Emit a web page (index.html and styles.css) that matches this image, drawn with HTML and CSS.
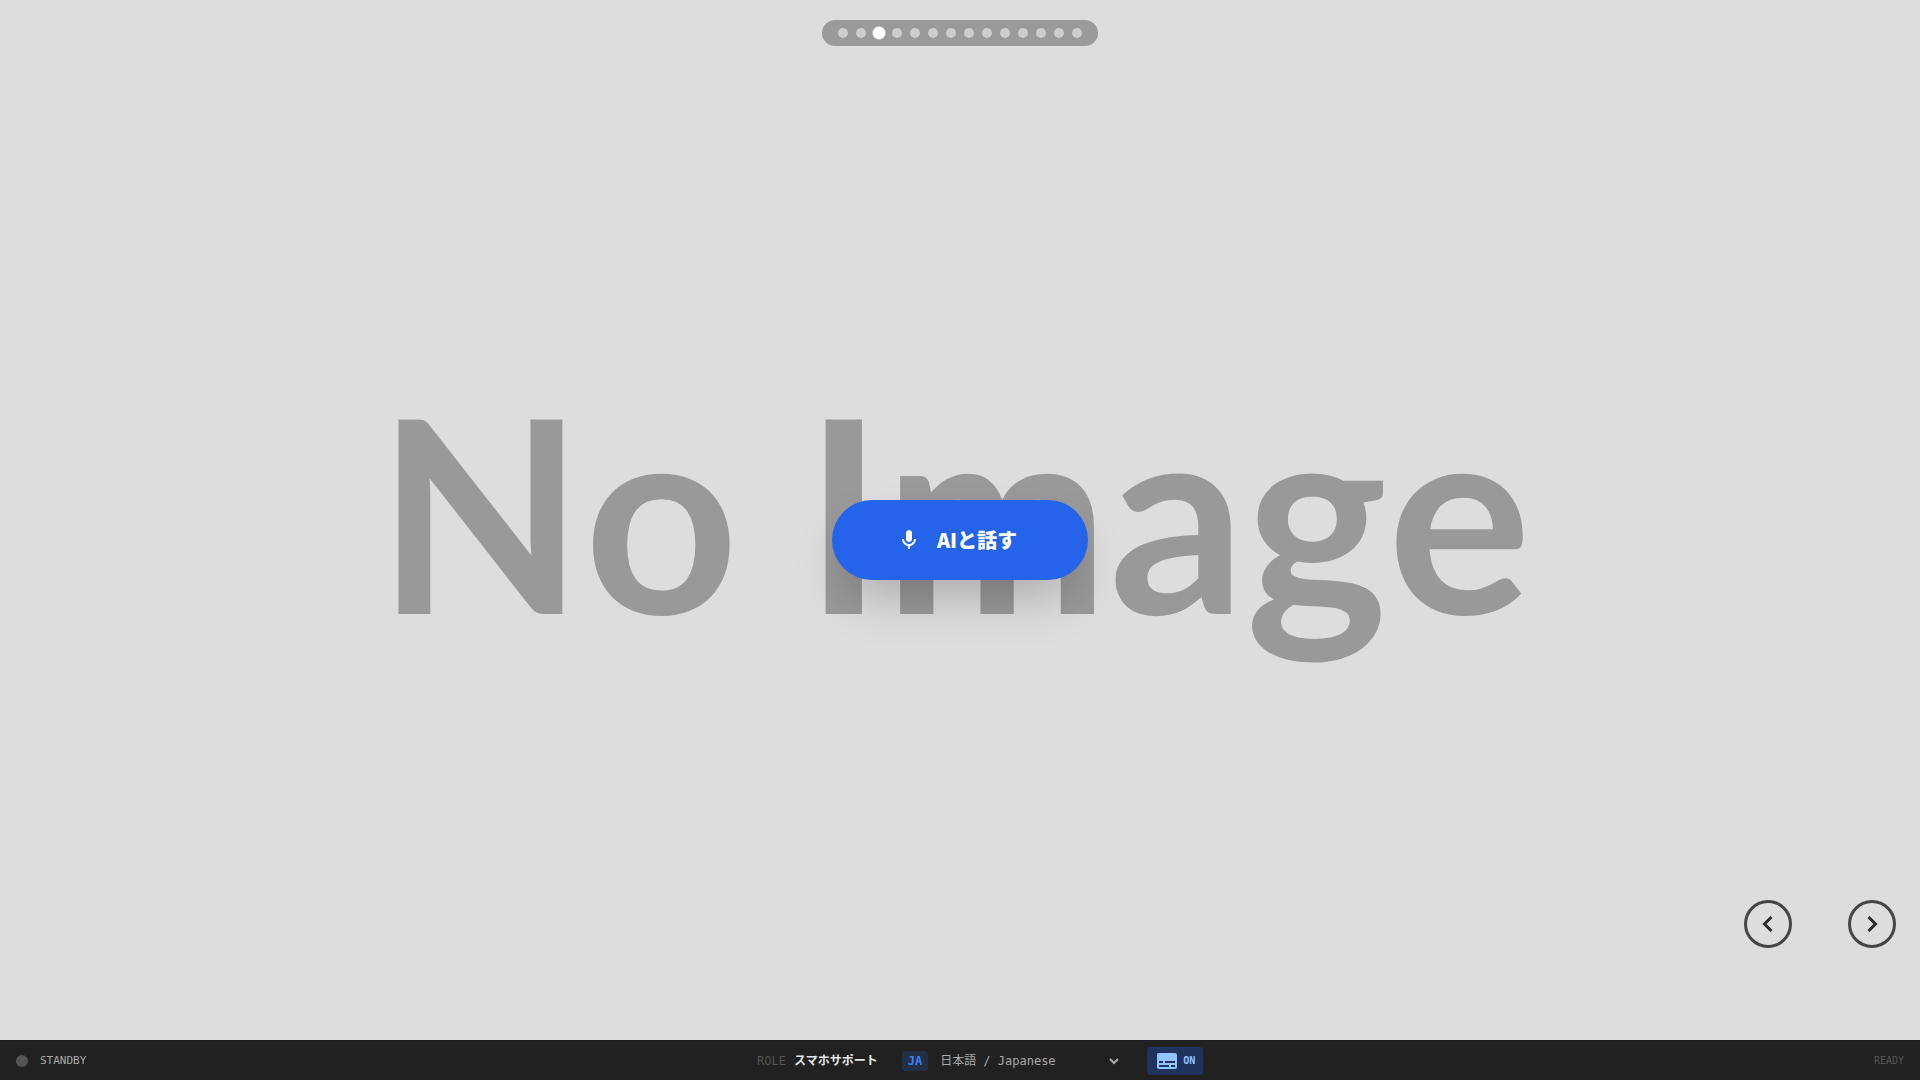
FILE: index.html
```html
<!DOCTYPE html>
<html lang="ja">
<head>
<meta charset="utf-8">
<meta name="viewport" content="width=device-width, initial-scale=1">
<title>スマホサポート</title>
<link rel="stylesheet" href="styles.css">
</head>
<body>
<div class="app">
  <main class="stage">
    <p class="placeholder">No Image</p>
    <div class="pager">
      <span class="dot"></span>
      <span class="dot"></span>
      <span class="dot dot-active"></span>
      <span class="dot"></span>
      <span class="dot"></span>
      <span class="dot"></span>
      <span class="dot"></span>
      <span class="dot"></span>
      <span class="dot"></span>
      <span class="dot"></span>
      <span class="dot"></span>
      <span class="dot"></span>
      <span class="dot"></span>
      <span class="dot"></span>
    </div>
    <button class="talk" type="button">
      <svg class="talk-icon" viewBox="0 0 24 24" aria-hidden="true"><path d="M12 14c1.66 0 3-1.34 3-3V5c0-1.66-1.34-3-3-3S9 3.340 9 5v6c0 1.660 1.340 3 3 3z"/><path d="M17 11c0 2.760-2.240 5-5 5s-5-2.240-5-5H5c0 3.530 2.610 6.430 6 6.920V21h2v-3.080c3.390-.49 6-3.390 6-6.920h-2z"/></svg>
      <span>AIと話す</span>
    </button>
    <nav class="slide-nav">
      <button class="round" type="button" aria-label="前へ"><svg class="round-icon" viewBox="0 0 24 24" aria-hidden="true"><path d="M15.500 5l-7 7 7 7"/></svg></button>
      <button class="round" type="button" aria-label="次へ"><svg class="round-icon" viewBox="0 0 24 24" aria-hidden="true"><path d="M8.500 5l7 7-7 7"/></svg></button>
    </nav>
  </main>
  <footer class="bar">
    <div class="status"><span class="lamp"></span><span>STANDBY</span></div>
    <div class="controls">
      <div class="role"><span class="role-label">ROLE</span><span class="role-name">スマホサポート</span></div>
      <div class="language">
        <label class="code" for="lang">JA</label>
        <div class="picker">
          <select class="select" id="lang"><option>日本語 / Japanese</option></select>
          <svg class="chevron" viewBox="0 0 10 10" aria-hidden="true"><path d="M1 3l4 4 4-4"/></svg>
        </div>
      </div>
      <button class="captions" type="button">
        <svg class="captions-icon" viewBox="0 0 20 16" aria-hidden="true"><rect width="20" height="16" rx="2"/><path class="captions-lines" d="M2 9h4M8 9h10M2 13h10M14 13h4"/></svg>
        <span>ON</span>
      </button>
    </div>
    <span class="ready">READY</span>
  </footer>
</div>
</body>
</html>
```
FILE: styles.css
```css
* {
  box-sizing: border-box;
}

body {
  margin: 0;
  font-family: "Noto Sans CJK JP", sans-serif;
  background: #ddd;
}

button,
select {
  margin: 0;
  padding: 0;
  border: 0;
  font: inherit;
  color: inherit;
  background: none;
  cursor: pointer;
}

.app {
  display: flex;
  flex-direction: column;
  min-height: 100vh;
}

/* The stage runs behind the status bar, so its centre is the window's. */
.stage {
  position: relative;
  flex: 1;
  display: grid;
  place-items: center;
  margin-bottom: -40px;
}

.placeholder {
  grid-area: 1 / 1;
  margin: 0;
  padding: 0 12px 60px 0;
  font-family: Lato, sans-serif;
  font-size: 269px;
  font-weight: 700;
  font-kerning: none;
  line-height: 320px;
  white-space: nowrap;
  color: #999;
}

.pager {
  position: absolute;
  top: 20px;
  left: 50%;
  transform: translateX(-50%);
  display: flex;
  gap: 8px;
  padding: 8px 16px;
  border-radius: 13px;
  background: rgba(0, 0, 0, 0.3);
}

.dot {
  width: 10px;
  height: 10px;
  border-radius: 50%;
  background: rgba(255, 255, 255, 0.5);
}

.dot-active {
  background: #fff;
  transform: scale(1.3);
}

.talk {
  grid-area: 1 / 1;
  z-index: 1;
  display: flex;
  align-items: center;
  justify-content: center;
  gap: 16px;
  width: 256px;
  height: 80px;
  padding-right: 6px;
  border-radius: 40px;
  font-size: 20px;
  font-weight: 900;
  line-height: 28px;
  color: #fff;
  background: #2563eb;
  box-shadow: 0 25px 50px -12px rgba(0, 0, 0, 0.25);
}

.talk-icon {
  width: 24px;
  height: 24px;
  fill: currentColor;
}

.slide-nav {
  position: absolute;
  right: 24px;
  bottom: 132px;
  display: flex;
  gap: 56px;
}

.round {
  display: grid;
  place-items: center;
  width: 48px;
  height: 48px;
  border: 3px solid #444;
  border-radius: 50%;
}

.round-icon {
  width: 24px;
  height: 24px;
  fill: none;
  stroke: #2a2a2a;
  stroke-width: 3;
}

.bar {
  z-index: 2;
  display: flex;
  align-items: center;
  justify-content: space-between;
  height: 40px;
  padding: 0 16px;
  border-top: 1px solid #1e1e1e;
  font-family: "DejaVu Sans Mono", "Noto Sans CJK JP", monospace;
  font-size: 12px;
  line-height: 16px;
  color: #aaa;
  background: #212121;
}

.status {
  display: flex;
  align-items: center;
  gap: 12px;
  font-size: 11px;
}

.lamp {
  width: 12px;
  height: 12px;
  border-radius: 50%;
  background: #555;
}

.controls {
  display: flex;
  align-items: center;
  gap: 24px;
}

.role {
  display: flex;
  align-items: center;
  gap: 8px;
}

.role-label {
  color: #555;
}

.role-name {
  font-weight: 700;
  color: #e5e5e5;
}

.language {
  display: flex;
  align-items: center;
  gap: 12px;
}

.code {
  padding: 0 6px;
  border-radius: 3px;
  font-weight: 700;
  line-height: 20px;
  color: #3b82f6;
  background: #222f45;
}

.picker {
  display: grid;
  align-items: center;
  width: 183px;
}

.select {
  grid-area: 1 / 1;
  appearance: none;
  width: 100%;
  height: 24px;
}

.chevron {
  grid-area: 1 / 1;
  justify-self: end;
  width: 10px;
  height: 10px;
  margin-right: 4px;
  fill: none;
  stroke: #aaa;
  stroke-width: 2;
  pointer-events: none;
}

.captions {
  display: flex;
  align-items: center;
  gap: 6px;
  width: 56px;
  height: 28px;
  padding-left: 10px;
  border-radius: 4px;
  font-size: 10px;
  font-weight: 700;
  color: #93c5fd;
  background: #20335f;
}

.captions-icon {
  width: 20px;
  height: 16px;
  fill: currentColor;
}

.captions-lines {
  fill: none;
  stroke: #20335f;
  stroke-width: 2;
}

.ready {
  font-size: 10px;
  color: #555;
}
```
